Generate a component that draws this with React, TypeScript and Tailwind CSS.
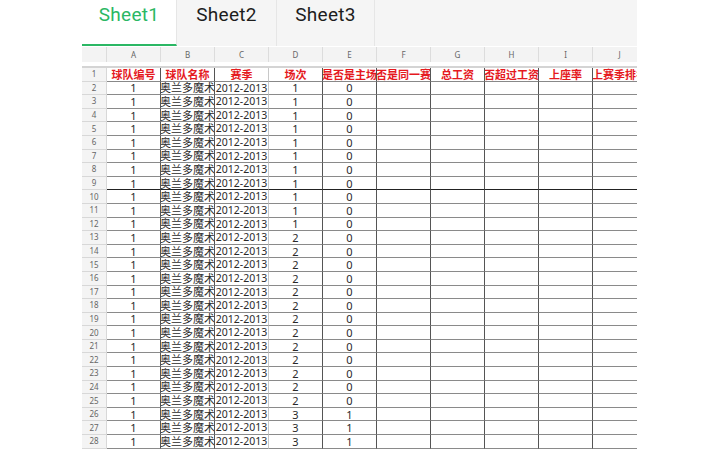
import React from 'react';

const COLS = ['A', 'B', 'C', 'D', 'E', 'F', 'G', 'H', 'I', 'J'];
const HEADERS = ['球队编号', '球队名称', '赛季', '场次', '是否是主场', '是否是同一赛季', '总工资', '是否超过工资帽', '上座率', '上赛季排名'];

const rows = Array.from({ length: 27 }, (_, i) => {
  const n = i + 2;
  const game = n <= 12 ? '1' : n <= 25 ? '2' : '3';
  const home = n <= 25 ? '0' : '1';
  return { n, cells: ['1', '奥兰多魔术', '2012-2013', game, home, '', '', '', '', ''] };
});

const font = { fontFamily: '"Noto Sans", "Noto Sans CJK SC", sans-serif' };
const tabFont = { fontFamily: 'Roboto, "Noto Sans", sans-serif' };

// vertical divider colour per column (right edge)
const colBorder = (i: number) => (i === 2 ? 'border-r-[#c8c8c8]' : 'border-r-[#555]');

function Tab({ label, active, width }: { label: string; active?: boolean; width: string }) {
  return (
    <div
      style={tabFont}
      className={`${width} flex h-full shrink-0 justify-center border-r border-[#e6e6e6] pt-[3px] text-[19px] leading-[24px] tracking-[0.3px] ${
        active ? 'border-b-[2px] border-b-[#2bb764] bg-white text-[#2bb764]' : 'text-[#1d1d1d]'
      }`}
    >
      {label}
    </div>
  );
}

export default function App() {
  return (
    <div className="h-[450px] w-[720px] overflow-hidden bg-white" style={font}>
      <div className="ml-[82px] flex h-full w-[555px] flex-col overflow-hidden">
        {/* sheet tabs */}
        <div className="flex h-[46px] shrink-0 bg-[#f5f5f5]">
          <Tab label="Sheet1" active width="w-[95px]" />
          <Tab label="Sheet2" width="w-[100px]" />
          <Tab label="Sheet3" width="w-[98px]" />
        </div>

        {/* column letters */}
        <div className="mt-px grid h-[15px] shrink-0 grid-cols-[25px_repeat(10,54px)] bg-[#f3f3f3]">
          <div className="border-r border-[#dcdcdc]" />
          {COLS.map((c) => (
            <div key={c} className="flex items-center justify-center border-r border-[#dcdcdc] text-[8px] text-[#666]">
              {c}
            </div>
          ))}
        </div>

        <div className="h-[6px] shrink-0 border-b-[2px] border-[#d4d4d4]" />

        {/* header row */}
        <div className="grid h-[13.6px] shrink-0 grid-cols-[25px_repeat(10,54px)]">
          <div className="flex items-center justify-center border-r border-b border-[#d8d8d8] bg-[#f4f4f4] text-[8px] text-[#666]">
            1
          </div>
          {HEADERS.map((h, i) => (
            <div
              key={h}
              className={`flex items-center justify-center overflow-hidden whitespace-nowrap border-r border-b border-b-[#888] ${colBorder(i)} text-[11px] font-bold leading-none text-[#e5191e]`}
            >
              {h}
            </div>
          ))}
        </div>

        {rows.map((r) => (
          <div key={r.n} className="grid h-[13.6px] shrink-0 grid-cols-[25px_repeat(10,54px)]">
            <div className="flex items-center justify-center border-r border-b border-[#d8d8d8] bg-[#f4f4f4] text-[8px] text-[#666]">
              {r.n}
            </div>
            {r.cells.map((v, i) => (
              <div
                key={i}
                className={`flex items-center justify-center overflow-hidden whitespace-nowrap border-r ${colBorder(i)} ${
                  r.n === 9 ? 'border-b border-b-[#222]' : 'border-b border-b-[#8a8a8a]'
                } ${i === 2 ? 'text-[10.5px]' : 'text-[11px]'} leading-none text-[#2a2a2a]`}
              >
                {v}
              </div>
            ))}
          </div>
        ))}
      </div>
    </div>
  );
}
